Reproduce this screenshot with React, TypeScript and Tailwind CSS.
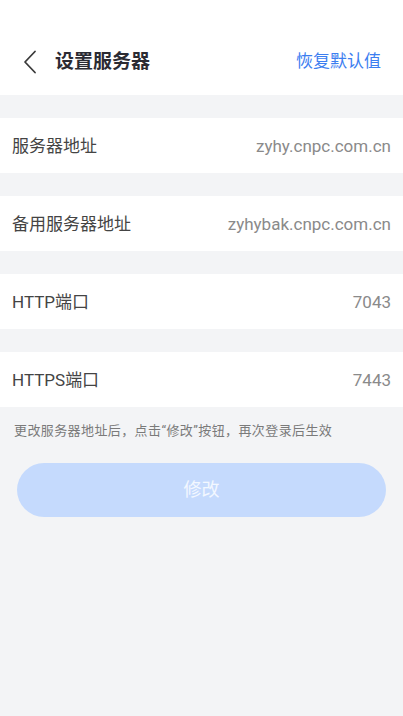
const FONT = "font-['Roboto','Noto_Sans_CJK_SC',sans-serif]"

const rows = [
  { label: "服务器地址", value: "zyhy.cnpc.com.cn" },
  { label: "备用服务器地址", value: "zyhybak.cnpc.com.cn" },
  { label: "HTTP端口", value: "7043" },
  { label: "HTTPS端口", value: "7443" },
]

export default function App() {
  return (
    <div className={`flex h-[716px] w-full flex-col bg-[#f3f4f6] ${FONT}`}>
      <header className="flex h-[95px] shrink-0 items-end bg-white px-[12px] pb-[18px]">
        <div className="flex w-full items-center">
          <button type="button" className="flex h-[30px] w-[36px] items-center justify-center text-[#333]">
            <svg width="14" height="24" viewBox="0 0 14 24" fill="none">
              <path d="M12 1.5 L2 12 L12 22.5" stroke="#3a3a3a" strokeWidth="1.8" strokeLinecap="round" strokeLinejoin="round" />
            </svg>
          </button>
          <h1 className="ml-[7px] text-[19px] font-bold text-[#2b2b33]">设置服务器</h1>
          <button type="button" className="ml-auto pr-[10px] text-[17px] text-[#3c7ef0]">
            恢复默认值
          </button>
        </div>
      </header>

      <div className="mt-[23px] flex flex-col gap-[23px]">
        {rows.map((row) => (
          <div key={row.label} className="flex h-[55px] items-center justify-between bg-white px-[12px] pt-[3px]">
            <span className="text-[17px] text-[#444]">{row.label}</span>
            <span className="text-[17px] text-[#8a8a8a]">{row.value}</span>
          </div>
        ))}
      </div>

      <p className="mt-[14px] px-[14px] text-[13px] tracking-[0.4px] text-[#7a7a7a]">
        更改服务器地址后，点击“修改”按钮，再次登录后生效
      </p>

      <div className="mt-[22px] px-[17px]">
        <button
          type="button"
          className="flex h-[54px] w-full items-center justify-center rounded-full bg-[#c5dafd] text-[18px] text-white/80"
        >
          修改
        </button>
      </div>
    </div>
  )
}
